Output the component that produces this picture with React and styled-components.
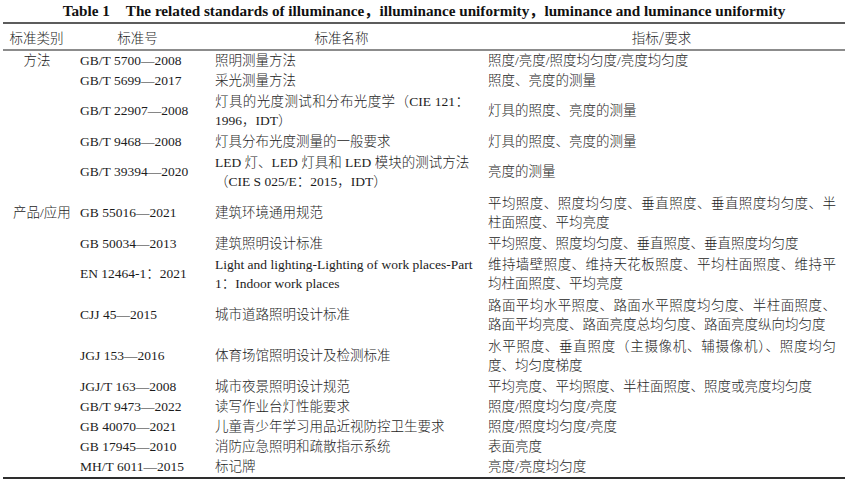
import React from 'react';
import styled, { createGlobalStyle } from 'styled-components';

const Global = createGlobalStyle`
  html, body { margin: 0; padding: 0; background: #fff; }
  body {
    font-family: "Liberation Serif", "Noto Sans CJK SC", serif;
    color: #1c1c1c;
  }
`;

const Page = styled.div`
  width: 850px;
  height: 489px;
  padding: 0 5px 0 3px;
  box-sizing: border-box;
`;

const Title = styled.h1`
  margin: 0;
  height: 22px;
  line-height: 22px;
  font-size: 15.2px;
  font-weight: bold;
  text-align: center;
  color: #111;
  white-space: nowrap;
`;

const TitleLabel = styled.span`
  margin-right: 16px;
`;

const Table = styled.div`
  display: flex;
  flex-direction: column;
  border-top: 2px solid #5c5c5c;
  border-bottom: 2px solid #2e2e2e;
  font-weight: 300;
`;

const Row = styled.div`
  display: grid;
  grid-template-columns: 67px 135px 273px 367px;
  height: ${(p) => (p.$tall ? 41 : 20)}px;
  font-size: 13.5px;
`;

const HeadRow = styled(Row)`
  height: 25px;
  border-bottom: 2px solid #8c8c8c;
`;

const HeadCell = styled.div`
  display: flex;
  align-items: center;
  justify-content: center;
  font-family: "Noto Sans CJK SC", sans-serif;
  white-space: nowrap;
`;

const Cell = styled.div`
  display: flex;
  flex-direction: column;
  justify-content: center;
  padding: 0 9px 0 10px;
  line-height: 18.5px;
  white-space: nowrap;
  text-align: ${(p) => (p.$center ? 'center' : 'left')};
`;

const Line = styled.div`
  text-align-last: ${(p) => (p.$justify ? 'justify' : 'auto')};
  text-align: ${(p) => (p.$justify ? 'justify' : 'inherit')};
`;

const rows = [
  { cat: '方法', code: 'GB/T 5700—2008', name: ['照明测量方法'], req: ['照度/亮度/照度均匀度/亮度均匀度'] },
  { cat: '', code: 'GB/T 5699—2017', name: ['采光测量方法'], req: ['照度、亮度的测量'] },
  { cat: '', code: 'GB/T 22907—2008', name: ['灯具的光度测试和分布光度学（CIE 121：', '1996，IDT）'], req: ['灯具的照度、亮度的测量'] },
  { cat: '', code: 'GB/T 9468—2008', name: ['灯具分布光度测量的一般要求'], req: ['灯具的照度、亮度的测量'] },
  { cat: '', code: 'GB/T 39394—2020', name: ['LED 灯、LED 灯具和 LED 模块的测试方法', '（CIE S 025/E：2015，IDT）'], req: ['亮度的测量'] },
  { cat: '产品/应用', code: 'GB 55016—2021', name: ['建筑环境通用规范'], req: ['平均照度、照度均匀度、垂直照度、垂直照度均匀度、半', '柱面照度、平均亮度'] },
  { cat: '', code: 'GB 50034—2013', name: ['建筑照明设计标准'], req: ['平均照度、照度均匀度、垂直照度、垂直照度均匀度'] },
  { cat: '', code: 'EN 12464-1：2021', name: ['Light and lighting-Lighting of work places-Part', '1：Indoor work places'], req: ['维持墙壁照度、维持天花板照度、平均柱面照度、维持平', '均柱面照度、平均亮度'] },
  { cat: '', code: 'CJJ 45—2015', name: ['城市道路照明设计标准'], req: ['路面平均水平照度、路面水平照度均匀度、半柱面照度、', '路面平均亮度、路面亮度总均匀度、路面亮度纵向均匀度'] },
  { cat: '', code: 'JGJ 153—2016', name: ['体育场馆照明设计及检测标准'], req: ['水平照度、垂直照度（主摄像机、辅摄像机）、照度均匀', '度、均匀度梯度'] },
  { cat: '', code: 'JGJ/T 163—2008', name: ['城市夜景照明设计规范'], req: ['平均亮度、平均照度、半柱面照度、照度或亮度均匀度'] },
  { cat: '', code: 'GB/T 9473—2022', name: ['读写作业台灯性能要求'], req: ['照度/照度均匀度/亮度'] },
  { cat: '', code: 'GB 40070—2021', name: ['儿童青少年学习用品近视防控卫生要求'], req: ['照度/照度均匀度/亮度'] },
  { cat: '', code: 'GB 17945—2010', name: ['消防应急照明和疏散指示系统'], req: ['表面亮度'] },
  { cat: '', code: 'MH/T 6011—2015', name: ['标记牌'], req: ['亮度/亮度均匀度'] },
];

function Lines({ items }) {
  return items.map((t, i) => (
    <Line key={i} $justify={items.length > 1 && i < items.length - 1}>
      {t}
    </Line>
  ));
}

export default function App() {
  return (
    <Page>
      <Global />
      <Title>
        <TitleLabel>Table 1</TitleLabel>
        The related standards of illuminance，illuminance uniformity，luminance and luminance uniformity
      </Title>
      <Table>
        <HeadRow>
          <HeadCell>标准类别</HeadCell>
          <HeadCell>标准号</HeadCell>
          <HeadCell>标准名称</HeadCell>
          <HeadCell>指标/要求</HeadCell>
        </HeadRow>
        {rows.map((r) => {
          const tall = r.name.length > 1 || r.req.length > 1;
          return (
            <Row key={r.code} $tall={tall}>
              <Cell $center>{r.cat}</Cell>
              <Cell>{r.code}</Cell>
              <Cell>
                <Lines items={r.name} />
              </Cell>
              <Cell>
                <Lines items={r.req} />
              </Cell>
            </Row>
          );
        })}
      </Table>
    </Page>
  );
}
